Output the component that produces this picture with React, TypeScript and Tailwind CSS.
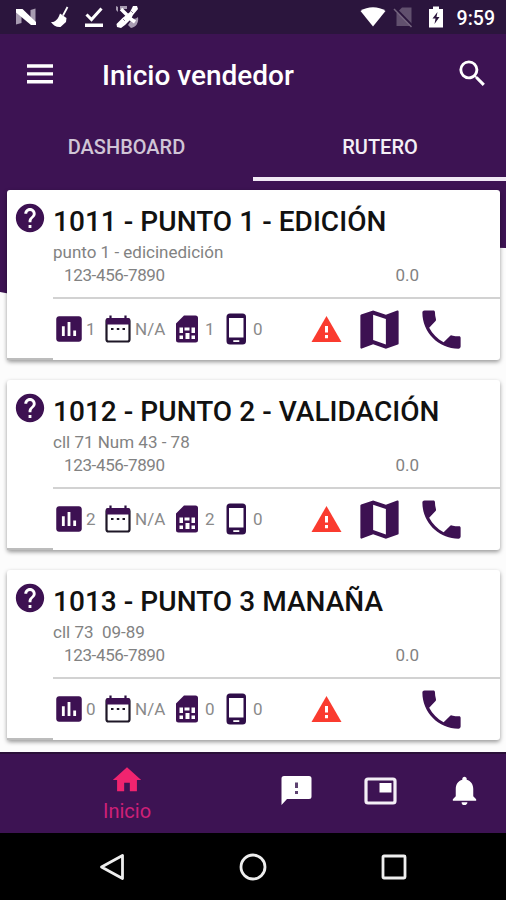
import React from 'react';
import {
  MdHelp,
  MdHome,
  MdInsertChart,
  MdMap,
  MdNotifications,
  MdSearch,
} from 'react-icons/md';

interface Stop {
  title: string;
  address: string;
  phone: string;
  balance: string;
  surveys: number;
  visit: string;
  sims: number;
  devices: number;
  hasMap: boolean;
}

const stops: Stop[] = [
  {
    title: '1011 - PUNTO 1 - EDICIÓN',
    address: 'punto 1 - edicinedición',
    phone: '123-456-7890',
    balance: '0.0',
    surveys: 1,
    visit: 'N/A',
    sims: 1,
    devices: 0,
    hasMap: true,
  },
  {
    title: '1012 - PUNTO 2 - VALIDACIÓN',
    address: 'cll 71 Num 43 - 78',
    phone: '123-456-7890',
    balance: '0.0',
    surveys: 2,
    visit: 'N/A',
    sims: 2,
    devices: 0,
    hasMap: true,
  },
  {
    title: '1013 - PUNTO 3 MANAÑA',
    address: 'cll 73  09-89',
    phone: '123-456-7890',
    balance: '0.0',
    surveys: 0,
    visit: 'N/A',
    sims: 0,
    devices: 0,
    hasMap: false,
  },
];

const CalendarIcon = () => (
  <svg className="h-7 w-[26px] shrink-0" viewBox="0 0 26 28">
    <path d="M5.5 0.5v4M20.5 0.5v4" stroke="#2b1140" strokeWidth="2.2" />
    <rect x="1.5" y="4" width="23" height="22.5" rx="2" fill="#fff" stroke="#1d1626" strokeWidth="2.2" />
    <path d="M1 5a2 2 0 0 1 2-2h20a2 2 0 0 1 2 2v4.500H1z" fill="#3d1152" />
    <path d="M6 13h2.500v2H6zM11.800 13h2.500v2h-2.500zM17.500 13h2.500v2h-2.500z" fill="#1d1626" />
  </svg>
);

const SimIcon = () => (
  <svg className="h-7 w-6 shrink-0" viewBox="0 0 24 28">
    <path d="M9 .5h11.500a2.500 2.500 0 0 1 2.500 2.500v22a2.500 2.500 0 0 1-2.500 2.500h-17A2.500 2.500 0 0 1 1 25V8.500z" fill="#3d1152" />
    <path
      d="M4.500 12.500h3.500v5.500H4.500zM4.500 20.500h3.500v3.500H4.500zM9.500 12.500h5v3h-5zM10.500 18h4v6h-4zM16.500 12.500h3.500v5.500h-3.500zM16.500 20.500h3.500V24h-3.500z"
      fill="#fff"
    />
  </svg>
);

const DeviceIcon = () => (
  <svg className="h-8 w-[22px] shrink-0" viewBox="0 0 22 32">
    <rect x="1.500" y=".5" width="19.500" height="31" rx="3.500" fill="#2f0e49" />
    <path d="M4 5h14.500v19.500H4z" fill="#fff" />
    <path d="M8.300 27.200h6v1.800h-6z" fill="#fff" />
  </svg>
);

const WarningIcon = () => (
  <svg className="h-[28px] w-[31px] shrink-0" viewBox="0 0 31 28">
    <path d="M15.500 1L30.500 27H.5z" fill="#fa3b2f" />
    <path d="M14 11h3v6.500h-3zM14 20h3v3.200h-3z" fill="#fff" />
  </svg>
);

const CallIcon = () => (
  <svg className="ml-[11px] size-[51px] shrink-0" viewBox="0 0 24 24" fill="#3d1152">
    <path d="M6.200 11.200c1.600 3 3.800 5.200 6.800 6.800l3-3c.2-.2.500-.3.800-.2 1.200.3 2.300.4 3.500.4.450 0 .7.300.7.700V20c0 .55-.45 1-1 1-9.390 0-17-7.610-17-17 0-.55.45-1 1-1h4.200c.4 0 .7.300.7.700 0 1.200.2 2.400.5 3.500.1.300 0 .6-.2.800z" />
  </svg>
);

const StatusBar = () => (
  <div className="flex h-[34px] shrink-0 items-center bg-[#2b153d] pr-[11px] pl-[15px] text-white">
    <svg className="h-[18px] w-[22px]" viewBox="0 0 22 18">
      <path d="M1 3.500v13l5.500-1.500V6zM15.500 2l5-1.500V16l-5-4z" fill="#a79bb1" />
      <path d="M1 1h6.500l13.500 13v3h-5L1 4.500z" fill="#fff" />
    </svg>
    <svg className="ml-[14px] h-[22px] w-[18px]" viewBox="0 0 18 22">
      <path d="M16.500 1L12 9.500" stroke="#fff" strokeWidth="1.800" />
      <path d="M9 7.500l6.500 4.500-.5 4-5.500 5C6 21.500 2 19.500 0 16c4 .5 7-2.500 9-8.500z" fill="#fff" />
    </svg>
    <svg className="ml-[15px] h-[21px] w-[20px]" viewBox="0 0 20 21">
      <path d="M2.500 7.500L7.500 12.500l10-11" fill="none" stroke="#fff" strokeWidth="3" />
      <path d="M1 16.500h18V20H1z" fill="#fff" />
    </svg>
    <svg className="ml-[11px] h-6 w-[24px]" viewBox="0 0 24 24">
      <path d="M1 1l2 1v5L1 5zM5 1h7v3H5zM17 14c3 0 5-1 6-2 1 6-2 10-7 11l-3-3z" fill="#a79bb1" />
      <path d="M15 7l3-6h4l1 3-5 6-2 4-6 6-4 3-4-1-.5-3 6-6z" fill="#fff" />
      <path d="M6 4l6 6M13 12l7 5" stroke="#fff" strokeWidth="3.500" />
      <path d="M8 14l2 2M16 6l2 2" stroke="#75657f" strokeWidth=".8" />
    </svg>

    <svg className="ml-auto h-5 w-[26px]" viewBox="0 0 26 20">
      <path d="M.5 4C7.500-1 18.500-1 25.500 4L13 19.500z" fill="#fff" />
    </svg>
    <svg className="ml-[7px] h-[22px] w-5" viewBox="0 0 20 22">
      <path d="M9 1.500h9.500v18.500h-15V7z" fill="#61506e" />
      <path d="M1.500 1.500l17.500 18" stroke="#2b153d" strokeWidth="2.500" />
      <path d="M1 3l17.500 18" stroke="#75657f" strokeWidth="1.500" />
    </svg>
    <svg className="ml-[15px] h-[22px] w-4" viewBox="0 0 16 22">
      <path d="M5 .5h6V3h4v18.500H1V3h4z" fill="#fff" />
      <path d="M9.500 6L4.500 12.500h3L6.500 18l5-7h-3z" fill="#2b153d" />
    </svg>
    <span className="mt-[3px] ml-[13px] text-[19.5px] leading-none font-medium">9:59</span>
  </div>
);

const Tabs = () => (
  <div className="grid h-[64px] grid-cols-2 text-center text-[20px] leading-[60px] font-medium">
    <div className="text-[#d0c5d6]">DASHBOARD</div>
    <div className="border-b-4 border-[#f1e9f5] pl-px text-[#f4eff6]">RUTERO</div>
  </div>
);

const StopCard: React.FC<{ stop: Stop }> = ({ stop }) => (
  <div className="flex h-[170px] rounded-[3px] bg-white shadow-[0_2px_4px_rgba(0,0,0,0.4)]">
    <div className="flex w-[46px] shrink-0 flex-col border-b-2 border-[#bcbcbc] pt-[11px] pl-[6px]">
      <MdHelp className="size-[34px] text-[#3d1152]" />
    </div>
    <div className="flex min-w-0 grow flex-col">
      <h2 className="mt-[14px] text-[28px] leading-[35px] font-medium tracking-[0.04px] whitespace-nowrap text-[#111]">{stop.title}</h2>
      <p className="mt-[2px] text-[17px] leading-[22px] whitespace-pre text-[#828282]">{stop.address}</p>
      <div className="flex justify-between pr-[81px] pl-[11px] text-[17px] leading-[24px] text-[#828282]">
        <span className="tracking-[-0.35px]">{stop.phone}</span>
        <span>{stop.balance}</span>
      </div>
      <div className="mt-[10px] h-[2px] bg-[#d2d2d2]" />
      <div className="flex h-[63px] items-center text-[17px] text-[#8a8a8a]">
        <MdInsertChart className="-ml-px size-[34px] shrink-0 text-[#3d1152]" />
        <span className="w-[19px]">{stop.surveys}</span>
        <CalendarIcon />
        <span className="ml-1 w-10">{stop.visit}</span>
        <SimIcon />
        <span className="ml-[6px] w-[20px]">{stop.sims}</span>
        <DeviceIcon />
        <span className="ml-[6px] w-[58px]">{stop.devices}</span>
        <WarningIcon />
        {stop.hasMap ? <MdMap className="ml-[12px] size-[51px] shrink-0 text-[#3d1152]" /> : <div className="ml-[12px] w-[51px]" />}
        <CallIcon />
      </div>
    </div>
  </div>
);

const BottomNav = () => (
  <nav className="flex h-[81px] shrink-0 items-center border-t-2 border-[#2a1038] bg-[#3d1353] text-white">
    <div className="flex w-[254px] flex-col items-center text-[#f0246f]">
      <MdHome className="size-[34px]" />
      <span className="text-[20px] leading-[28px] text-[#cf2078]">Inicio</span>
    </div>
    <div className="mb-[6px] flex grow items-center justify-around">
      <svg className="size-[35px]" viewBox="0 0 35 35">
        <path d="M5 3h25a2.500 2.500 0 0 1 2.500 2.500v18A2.500 2.500 0 0 1 30 26H8l-5.500 6V5.500A2.500 2.500 0 0 1 5 3z" fill="#fff" />
        <path d="M16 9.500h3v5.500h-3zM16 18h3v3h-3z" fill="#5d4170" />
      </svg>
      <svg className="size-[35px]" viewBox="0 0 35 35">
        <rect x="3" y="6" width="29" height="24" rx="2" fill="none" stroke="#f4eff6" strokeWidth="3.200" />
        <path d="M16.500 10h12v9.500h-12z" fill="#fff" />
      </svg>
      <MdNotifications className="size-[35px]" />
    </div>
  </nav>
);

const SystemNav = () => (
  <div className="flex h-[67px] shrink-0 items-center justify-center gap-[113px] bg-black">
    <svg className="size-7" viewBox="0 0 28 28" fill="none" stroke="#eee" strokeWidth="2.800">
      <path d="M24.500 2.500v23L3.500 14z" strokeLinejoin="round" />
    </svg>
    <svg className="size-7" viewBox="0 0 28 28" fill="none" stroke="#eee" strokeWidth="2.800">
      <circle cx="14" cy="14" r="12" />
    </svg>
    <svg className="size-7" viewBox="0 0 28 28" fill="none" stroke="#eee" strokeWidth="2.800">
      <rect x="3" y="3" width="22" height="22" rx="1" />
    </svg>
  </div>
);

export default function App() {
  return (
    <div className="flex h-[900px] w-[506px] flex-col overflow-hidden bg-[#fcfcfc] font-[Roboto,sans-serif]">
      <StatusBar />
      <main className="relative isolate flex min-h-0 grow flex-col">
        {/* Wavy backdrop that runs behind the first card */}
        <svg className="absolute inset-x-0 top-0 -z-10 h-[262px] w-full" viewBox="0 0 506 262" preserveAspectRatio="none">
          <path d="M0 0H506V214C360 206 160 290 0 258z" fill="#3d1353" />
        </svg>
        <header className="text-white">
          <div className="flex h-[83px] items-center pr-[16px] pb-[4px] pl-[27px]">
            <svg className="h-5 w-[26px]" viewBox="0 0 26 20">
              <path d="M0 .3h26v3.500H0zM0 8.200h26v3.400H0zM0 16h26v3.500H0z" fill="#fff" />
            </svg>
            <h1 className="mt-[4px] ml-[49px] text-[28px] leading-none font-medium">Inicio vendedor</h1>
            <MdSearch className="ml-auto size-[35px]" />
          </div>
          <Tabs />
        </header>
        <section className="flex flex-col gap-5 pt-[9px] pr-[6px] pl-[7px]">
          {stops.map((stop) => (
            <StopCard key={stop.title} stop={stop} />
          ))}
        </section>
      </main>
      <BottomNav />
      <SystemNav />
    </div>
  );
}
